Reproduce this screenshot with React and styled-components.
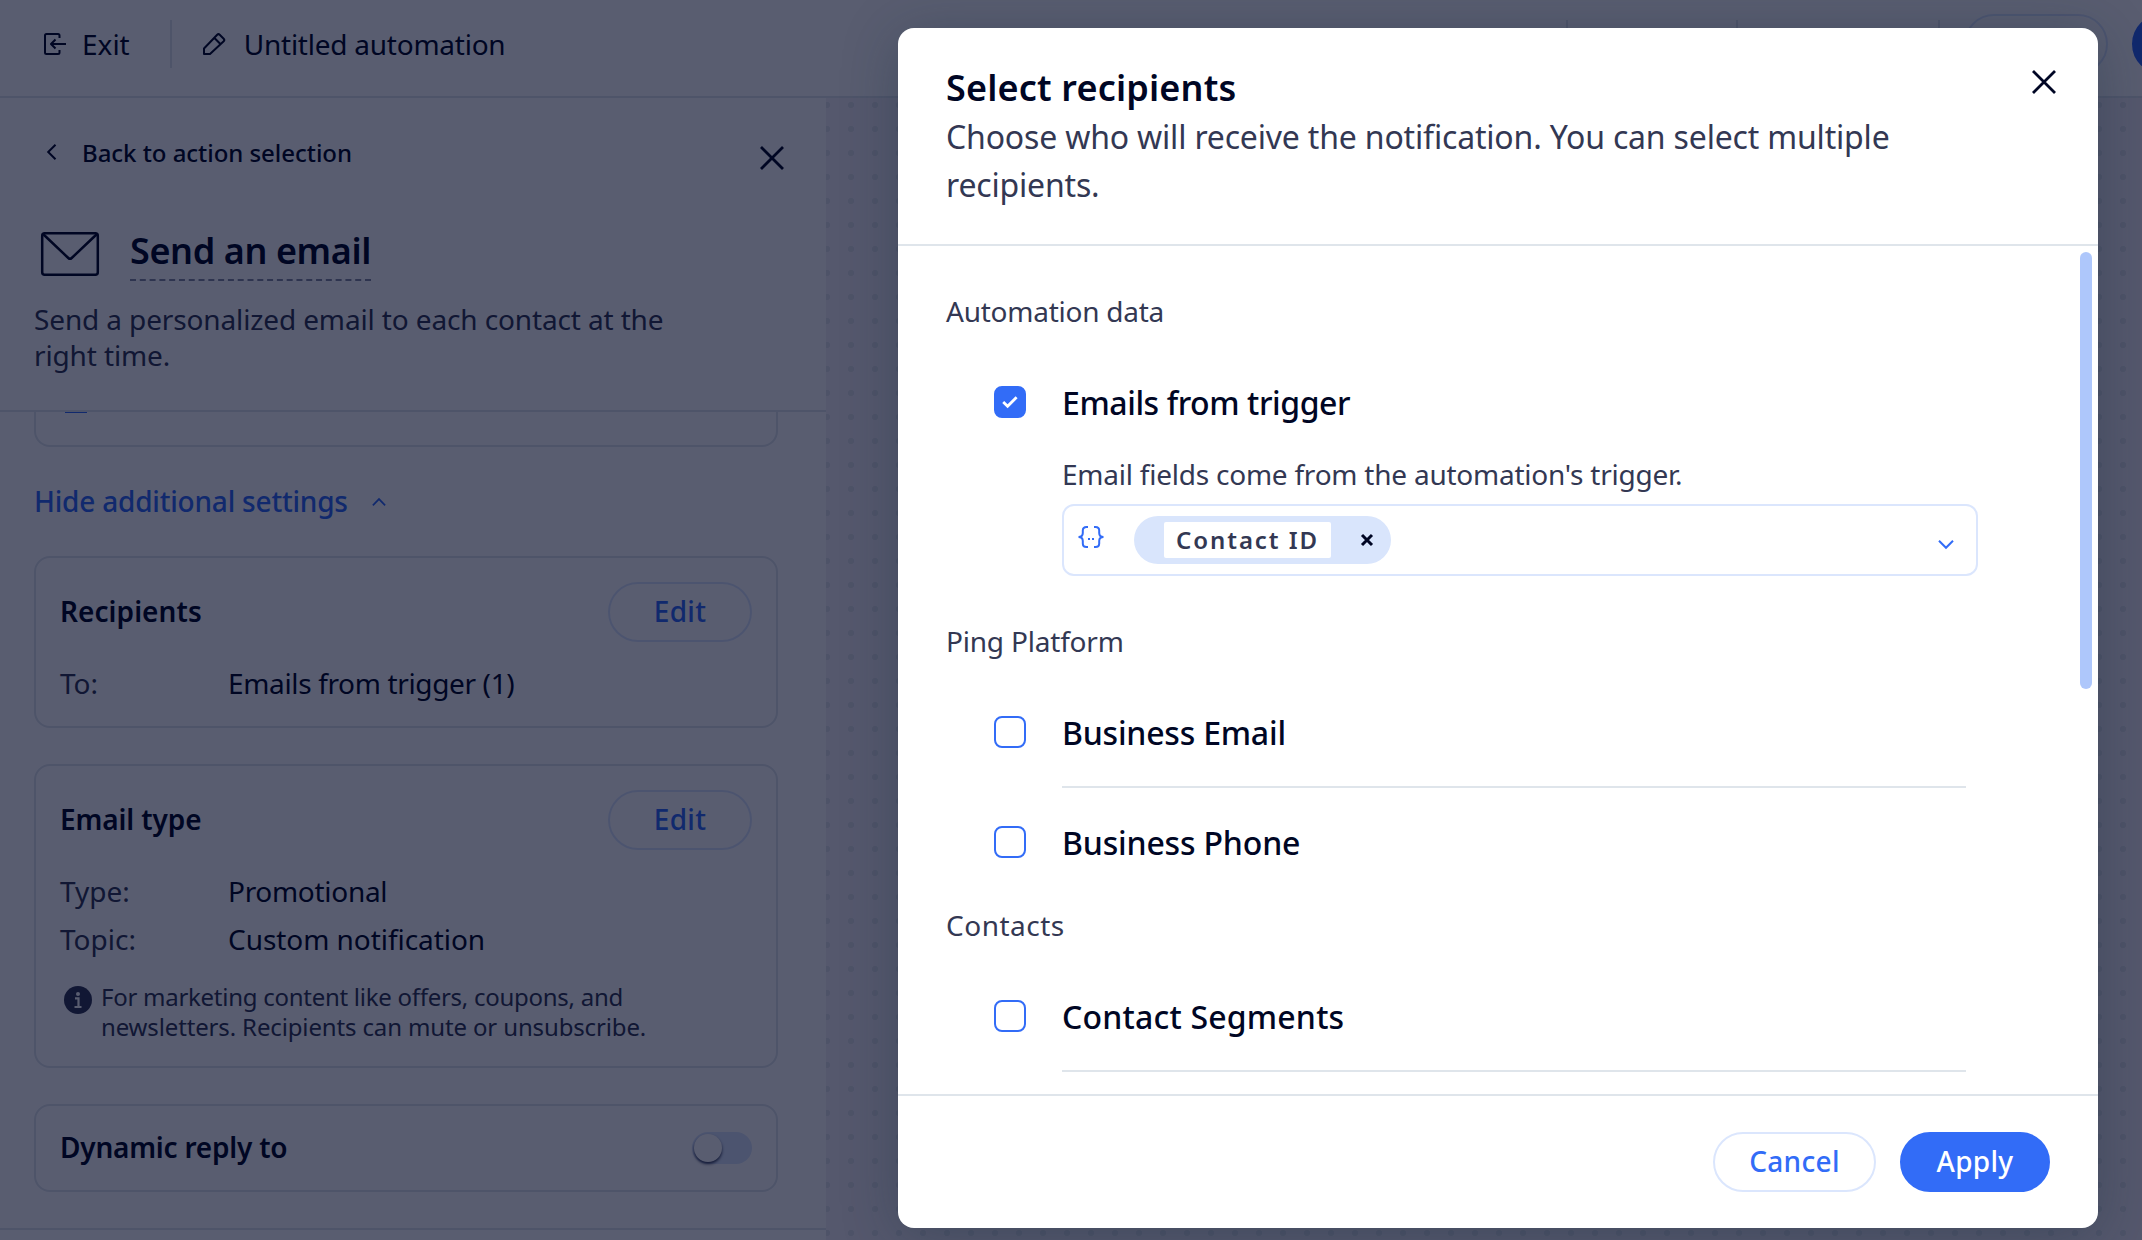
import {useState} from 'react'
import styled, {createGlobalStyle, ThemeProvider} from 'styled-components'

const theme = {
  text: {
    primary: '#000624',
    secondary: '#333853',
  },
  blue: '#326cf7',
  blueSoft: '#dbe6fd',
  blueTag: '#d9e5fc',
  blueScroll: '#aec7fb',
  border: '#dfe5eb',
  canvas: '#f3f1f7',
  dot: '#dee1e7',
}

const GlobalStyle = createGlobalStyle`
  * {
    box-sizing: border-box;
  }

  body {
    margin: 0;
    font-family: "Noto Sans", "Open Sans", sans-serif;
    color: ${props => props.theme.text.primary};
    background: #fff;
  }

  button {
    font-family: inherit;
    cursor: pointer;
  }

  h1, h2, h3, p {
    margin: 0;
  }

  svg {
    display: block;
    flex: none;
    fill: none;
    stroke: currentColor;
    overflow: visible;
  }
`

const Screen = styled.div`
  position: relative;
  width: 2142px;
  height: 1240px;
  overflow: hidden;
  display: flex;
  flex-direction: column;
  background: #fff;
`

/* top bar */

const TopBar = styled.header`
  display: flex;
  align-items: center;
  height: 98px;
  flex: none;
  padding: 0 0 8px 43px;
  border-bottom: 2px solid ${props => props.theme.border};
`

const TopItem = styled.div`
  display: flex;
  align-items: center;
  font-size: 28px;
  line-height: 40px;
  letter-spacing: ${props => props.$track || 0}px;
  white-space: nowrap;

  svg {
    margin-right: ${props => props.$gap}px;
  }
`

const TopDivider = styled.span`
  width: 2px;
  height: 48px;
  margin-left: ${props => props.$left}px;
  margin-right: ${props => props.$right || 0}px;
  background: ${props => props.theme.border};
  flex: none;
`

const TopTools = styled.div`
  display: flex;
  align-items: center;
  width: 576px;
  margin-left: auto;
  flex: none;
  overflow: hidden;
`

const TopPill = styled.span`
  width: ${props => props.$width}px;
  height: 60px;
  margin-left: ${props => props.$left}px;
  border-radius: 30px;
  border: 2px solid ${props => props.$filled ? props.theme.blue : props.theme.blueSoft};
  background: ${props => props.$filled ? props.theme.blue : '#fff'};
  flex: none;
`

/* side panel */

const Workspace = styled.main`
  flex: 1;
  min-height: 0;
  display: flex;
  background-color: ${props => props.theme.canvas};
  background-image: radial-gradient(circle at 12px 12px, ${props => props.theme.dot} 2.7px, transparent 3.4px);
  background-size: 24px 24px;
  background-position: -1px -5px;
`

const Panel = styled.aside`
  width: 826px;
  display: flex;
  flex-direction: column;
  background: #fff;
`

const PanelHeader = styled.div`
  padding: 36px 42px 37px 34px;
  border-bottom: 2px solid ${props => props.theme.border};
`

const BackRow = styled.div`
  display: flex;
  align-items: center;
  height: 36px;
  padding-left: 13px;
  font-size: 24px;
  font-weight: 500;
  letter-spacing: -0.04px;

  span {
    margin: 0 auto 0 25px;
  }

  svg:last-child {
    margin-top: 12px;
  }
`

const PanelTitleRow = styled.div`
  display: flex;
  align-items: flex-start;
  margin: 56px 0 20px;
  padding-left: 7px;

  svg {
    margin: 6px 31px 0 0;
  }
`

const PanelTitle = styled.h2`
  padding: 1px 0 4px;
  font-size: 36px;
  line-height: 48px;
  font-weight: 600;
  letter-spacing: -0.4px;
  border-bottom: 2px dashed #8589a0;
`

const PanelText = styled.p`
  width: 660px;
  font-size: 28px;
  line-height: 36px;
  letter-spacing: -0.13px;
  color: ${props => props.theme.text.secondary};
`

const PanelBody = styled.div`
  flex: 1;
  min-height: 0;
  padding: 0 48px 0 34px;
`

const PanelFooter = styled.div`
  height: 12px;
  flex: none;
  border-top: 2px solid ${props => props.theme.border};
`

const CardTail = styled.div`
  height: 35px;
  padding-left: 29px;
  border: 2px solid ${props => props.theme.border};
  border-top: 0;
  border-radius: 0 0 16px 16px;

  &::before {
    content: '';
    display: block;
    width: 22px;
    height: 1px;
    background: ${props => props.theme.blue};
  }
`

const ToggleLink = styled.div`
  display: flex;
  align-items: center;
  margin: 36px 0 37px;
  font-size: 28px;
  line-height: 36px;
  font-weight: 500;
  letter-spacing: -0.2px;
  color: ${props => props.theme.blue};

  svg {
    margin: 2px 0 0 24px;
  }
`

const Card = styled.section`
  padding: 24px 24px ${props => props.$bottom || 24}px;
  margin-bottom: 36px;
  border: 2px solid ${props => props.theme.border};
  border-radius: 16px;
`

const CardHead = styled.div`
  display: flex;
  align-items: center;
  justify-content: space-between;
  height: ${props => props.$height || 60}px;
`

const CardTitle = styled.h3`
  padding-bottom: 2px;
  font-size: 28px;
  line-height: 36px;
  font-weight: 600;
  letter-spacing: ${props => props.$track || 0}px;
`

const Details = styled.div`
  display: grid;
  grid-template-columns: 168px 1fr;
  grid-auto-rows: 48px;
  align-items: center;
  margin-top: 17px;
  font-size: 28px;
`

const Label = styled.span`
  color: ${props => props.theme.text.secondary};
`

const Value = styled.span`
  letter-spacing: ${props => props.$track || 0}px;
`

const Note = styled.div`
  display: flex;
  margin-top: 19px;
  padding-left: 4px;
  color: ${props => props.theme.text.secondary};

  svg {
    margin: 4px 9px 0 0;
  }
`

const NoteLine = styled.p`
  font-size: 24px;
  line-height: 30px;
  letter-spacing: ${props => props.$track}px;
  white-space: nowrap;
`

const Switch = styled.span`
  display: flex;
  width: 60px;
  height: 32px;
  padding: 2px;
  border-radius: 16px;
  background: ${props => props.theme.blueTag};

  &::before {
    content: '';
    width: 28px;
    height: 28px;
    border-radius: 50%;
    background: #fff;
    box-shadow: 0 2px 3px rgba(0, 6, 36, 0.75);
  }
`

const Button = styled.button`
  width: ${props => props.$width}px;
  height: 60px;
  padding: 0 0 2px;
  border: 2px solid ${props => props.$primary ? props.theme.blue : props.theme.blueSoft};
  border-radius: 30px;
  background: ${props => props.$primary ? props.theme.blue : 'transparent'};
  color: ${props => props.$primary ? '#fff' : props.theme.blue};
  font-size: 28px;
  font-weight: 500;
  letter-spacing: 0.3px;
  text-align: center;
`

/* modal */

const Overlay = styled.div`
  position: absolute;
  inset: 0;
  display: flex;
  justify-content: flex-end;
  padding: 28px 44px 12px;
  background: rgba(0, 6, 36, 0.65);
`

const Modal = styled.div`
  width: 1200px;
  display: flex;
  flex-direction: column;
  border-radius: 16px;
  background: #fff;
  box-shadow: 0 8px 56px rgba(22, 45, 61, 0.32);
`

const ModalHeader = styled.div`
  display: flex;
  justify-content: space-between;
  height: 218px;
  flex: none;
  padding: 36px 42px 0 48px;
  border-bottom: 2px solid ${props => props.theme.border};

  svg {
    margin-top: 6px;
  }
`

const ModalTitle = styled.h1`
  font-size: 36px;
  line-height: 48px;
  font-weight: 600;
  letter-spacing: 0.17px;
`

const ModalText = styled.p`
  width: 990px;
  padding-top: 1px;
  font-size: 32px;
  line-height: 48px;
  letter-spacing: -0.18px;
  color: ${props => props.theme.text.secondary};
`

const ModalBody = styled.div`
  flex: 1;
  min-height: 0;
  display: flex;
`

const Groups = styled.div`
  flex: 1;
  padding: 36px 0 0 48px;
`

const ScrollThumb = styled.div`
  width: 12px;
  height: 437px;
  margin: 6px 6px 0 0;
  border-radius: 6px;
  background: ${props => props.theme.blueScroll};
`

const GroupTitle = styled.h3`
  height: 66px;
  padding-top: 11px;
  font-size: 28px;
  line-height: 36px;
  font-weight: 400;
  letter-spacing: ${props => props.$track}px;
  color: ${props => props.theme.text.secondary};
`

const Option = styled.div`
  display: grid;
  grid-template-columns: 32px 1fr;
  column-gap: 36px;
  align-items: center;
  padding-left: 48px;
`

const Checkbox = styled.span`
  display: flex;
  align-items: center;
  justify-content: center;
  width: 32px;
  height: 32px;
  border: 2px solid ${props => props.theme.blue};
  border-radius: 8px;
  background: ${props => props.$checked ? props.theme.blue : '#fff'};
  color: #fff;
  cursor: pointer;
`

const OptionLabel = styled.span`
  display: flex;
  align-items: center;
  height: 108px;
  font-size: 32px;
  font-weight: 500;
  letter-spacing: ${props => props.$track}px;
`

const OptionDivider = styled.div`
  grid-column: 2;
  width: 904px;
  height: 2px;
  background: ${props => props.theme.border};
`

const OptionContent = styled.div`
  grid-column: 2;
  width: 916px;
  padding-bottom: 36px;
`

const Hint = styled.p`
  padding-bottom: 12px;
  font-size: 28px;
  line-height: 36px;
  letter-spacing: -0.23px;
  color: ${props => props.theme.text.secondary};
`

const Select = styled.div`
  display: flex;
  align-items: center;
  height: 72px;
  padding: 0 22px 0 14px;
  border: 2px solid ${props => props.theme.blueSoft};
  border-radius: 12px;
  color: ${props => props.theme.blue};

  > svg:first-child {
    margin: 0 30px 6px 0;
  }

  > svg:last-child {
    margin: 8px 0 0 auto;
  }
`

const Tag = styled.span`
  display: flex;
  align-items: center;
  height: 48px;
  padding: 0 18px 0 30px;
  border-radius: 24px;
  background: ${props => props.theme.blueTag};
  color: ${props => props.theme.text.primary};

  svg {
    margin-left: 30px;
  }
`

const TagText = styled.span`
  width: 167px;
  height: 36px;
  padding-left: 12px;
  border-radius: 2px;
  background: #fff;
  color: ${props => props.theme.text.secondary};
  font-size: 24px;
  line-height: 36px;
  font-weight: 600;
  letter-spacing: 1.93px;
  white-space: nowrap;
`

const ModalFooter = styled.div`
  display: flex;
  align-items: center;
  justify-content: flex-end;
  gap: 24px;
  height: 134px;
  flex: none;
  padding: 0 48px;
  border-top: 2px solid ${props => props.theme.border};
`

/* icons */

const ExitIcon = () => (
  <svg width="24" height="24" viewBox="0 0 24 24" strokeWidth="2" strokeLinejoin="round">
    <path d="M16.500 6V3.500a1.500 1.500 0 0 0-1.500-1.500H3.500A1.500 1.500 0 0 0 2 3.500v17a1.500 1.500 0 0 0 1.500 1.500H15a1.500 1.500 0 0 0 1.500-1.500V18" />
    <path d="M23 12H8M12.500 7.500 8 12l4.500 4.500" />
  </svg>
)

const PencilIcon = () => (
  <svg width="24" height="24" viewBox="0 0 24 24" strokeWidth="2" strokeLinejoin="round">
    <path d="M2 22v-5.500L15.200 2.700a1.800 1.800 0 0 1 2.500 0l4 4a1.800 1.800 0 0 1 0 2.500L8 22zM12.200 5.800l6.200 6.200" />
  </svg>
)

const CloseIcon = ({size = 24, stroke = 2.8}) => (
  <svg width={size} height={size} viewBox={`0 0 ${size} ${size}`} strokeWidth={stroke}>
    <path d={`M1 1 ${size - 1} ${size - 1}M${size - 1} 1 1 ${size - 1}`} />
  </svg>
)

const BackIcon = () => (
  <svg width="10" height="16" viewBox="0 0 10 16" strokeWidth="2">
    <path d="M8.500 .7 1.200 8l7.300 7.300" />
  </svg>
)

const EnvelopeIcon = () => (
  <svg width="58" height="44" viewBox="0 0 58 44" strokeWidth="2.500" strokeLinejoin="round">
    <rect x="1.200" y="1.200" width="55.600" height="41.600" rx="2.500" />
    <path d="M2 2 27.300 26a2.500 2.500 0 0 0 3.400 0L56 2" />
  </svg>
)

const ChevronIcon = ({up}) => (
  <svg width={up ? 14 : 16} height={up ? 8 : 9} viewBox="0 0 16 9" strokeWidth="2">
    <path d={up ? 'M1 8.300 8 1.200l7 7.100' : 'M1 .8 8 7.800l7-7'} />
  </svg>
)

const InfoIcon = () => (
  <svg width="28" height="28" viewBox="0 0 28 28">
    <circle cx="14" cy="14" r="14" fill="currentColor" stroke="none" />
    <circle cx="14" cy="8" r="2" fill="#fff" stroke="none" />
    <path d="M11 12.300h3.500V21M10.500 21h7" stroke="#fff" strokeWidth="2.200" />
  </svg>
)

const CheckIcon = () => (
  <svg width="16" height="12" viewBox="0 0 16 12" strokeWidth="2.800">
    <path d="M1.200 6 5.600 10.200 14.600 1.200" />
  </svg>
)

const BracesIcon = () => (
  <svg width="26" height="22" viewBox="0 0 26 22" strokeWidth="2">
    <path d="M10 1H8.500C6 1 4.800 2.200 4.800 4.500V7c0 2.500-1.300 4-4.300 4 3 0 4.300 1.500 4.300 4v2.500C4.800 19.800 6 21 8.500 21H10" />
    <path d="M16 1h1.500c2.500 0 3.700 1.200 3.700 3.500V7c0 2.500 1.300 4 4.300 4-3 0-4.300 1.500-4.300 4v2.500c0 2.300-1.200 3.500-3.700 3.500H16" />
    <path d="M10 13h2M14 13h2" />
  </svg>
)

const groups = [
  {
    title: 'Automation data', track: -0.25,
    options: [{
      id: 'trigger', label: 'Emails from trigger', track: -0.42,
      hint: "Email fields come from the automation's trigger.",
      tag: 'Contact ID',
    }],
  },
  {
    title: 'Ping Platform', track: -0.2,
    options: [
      {id: 'email', label: 'Business Email', track: -0.21, divider: true},
      {id: 'phone', label: 'Business Phone', track: -0.17},
    ],
  },
  {
    title: 'Contacts', track: 0.5,
    options: [{id: 'segments', label: 'Contact Segments', track: 0.2, divider: true}],
  },
]

const RecipientOption = ({option, checked, onToggle}) => (
  <Option>
    <Checkbox $checked={checked} onClick={() => onToggle(option.id)}>
      {checked && <CheckIcon />}
    </Checkbox>
    <OptionLabel $track={option.track}>{option.label}</OptionLabel>
    {option.divider && <OptionDivider />}
    {option.hint && (
      <OptionContent>
        <Hint>{option.hint}</Hint>
        <Select>
          <BracesIcon />
          <Tag>
            <TagText>{option.tag}</TagText>
            <CloseIcon size={12} stroke={3} />
          </Tag>
          <ChevronIcon />
        </Select>
      </OptionContent>
    )}
  </Option>
)

const App = () => {
  const [selected, setSelected] = useState(['trigger'])

  const handleToggle = (id) => {
    setSelected(selected.includes(id) ? selected.filter(item => item !== id) : [...selected, id])
  }

  return (
    <ThemeProvider theme={theme}>
      <GlobalStyle />
      <Screen>
        <TopBar>
          <TopItem $gap={15}><ExitIcon />Exit</TopItem>
          <TopDivider $left={40} $right={30} />
          <TopItem $gap={18} $track={-0.24}><PencilIcon />Untitled automation</TopItem>
          <TopTools>
            <TopDivider $left={0} />
            <TopDivider $left={168} />
            <TopDivider $left={200} />
            <TopPill $left={24} $width={144} />
            <TopPill $left={24} $width={180} $filled />
          </TopTools>
        </TopBar>

        <Workspace>
          <Panel>
            <PanelHeader>
              <BackRow>
                <BackIcon />
                <span>Back to action selection</span>
                <CloseIcon />
              </BackRow>
              <PanelTitleRow>
                <EnvelopeIcon />
                <PanelTitle>Send an email</PanelTitle>
              </PanelTitleRow>
              <PanelText>Send a personalized email to each contact at the right time.</PanelText>
            </PanelHeader>

            <PanelBody>
              <CardTail />
              <ToggleLink>Hide additional settings<ChevronIcon up /></ToggleLink>

              <Card $bottom={19}>
                <CardHead>
                  <CardTitle $track={0.05}>Recipients</CardTitle>
                  <Button $width={144}>Edit</Button>
                </CardHead>
                <Details>
                  <Label>To:</Label>
                  <Value $track={-0.35}>Emails from trigger (1)</Value>
                </Details>
              </Card>

              <Card>
                <CardHead>
                  <CardTitle $track={-0.12}>Email type</CardTitle>
                  <Button $width={144}>Edit</Button>
                </CardHead>
                <Details>
                  <Label>Type:</Label>
                  <Value $track={-0.3}>Promotional</Value>
                  <Label>Topic:</Label>
                  <Value $track={-0.05}>Custom notification</Value>
                </Details>
                <Note>
                  <InfoIcon />
                  <div>
                    <NoteLine $track={-0.27}>For marketing content like offers, coupons, and</NoteLine>
                    <NoteLine $track={-0.14}>newsletters. Recipients can mute or unsubscribe.</NoteLine>
                  </div>
                </Note>
              </Card>

              <Card>
                <CardHead $height={36}>
                  <CardTitle $track={-0.22}>Dynamic reply to</CardTitle>
                  <Switch />
                </CardHead>
              </Card>
            </PanelBody>
            <PanelFooter />
          </Panel>
        </Workspace>

        <Overlay>
          <Modal>
            <ModalHeader>
              <div>
                <ModalTitle>Select recipients</ModalTitle>
                <ModalText>Choose who will receive the notification. You can select multiple recipients.</ModalText>
              </div>
              <CloseIcon />
            </ModalHeader>
            <ModalBody>
              <Groups>
                {groups.map(group => (
                  <div key={group.title}>
                    <GroupTitle $track={group.track}>{group.title}</GroupTitle>
                    {group.options.map(option => (
                      <RecipientOption
                        key={option.id}
                        option={option}
                        checked={selected.includes(option.id)}
                        onToggle={handleToggle} />
                    ))}
                  </div>
                ))}
              </Groups>
              <ScrollThumb />
            </ModalBody>
            <ModalFooter>
              <Button $width={163}>Cancel</Button>
              <Button $primary $width={150}>Apply</Button>
            </ModalFooter>
          </Modal>
        </Overlay>
      </Screen>
    </ThemeProvider>
  )
}

export default App
